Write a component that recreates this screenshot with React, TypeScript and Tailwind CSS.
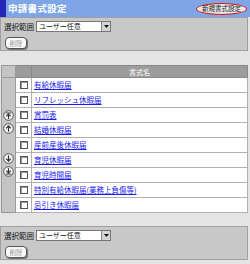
import React from "react";

const font = { fontFamily: '"Noto Sans CJK JP", "Noto Sans", sans-serif' };

const forms = [
  "有給休暇届",
  "リフレッシュ休暇届",
  "賞罰表",
  "結婚休暇届",
  "産前産後休暇届",
  "育児休暇届",
  "育児時間届",
  "特別有給休暇届(業務上負傷等)",
  "忌引き休暇届",
];

function MoveButton({ dir }: { dir: "top" | "up" | "down" | "bottom" }) {
  return (
    <svg width="11" height="11" viewBox="0 0 11 11" className="block">
      <circle cx="5.5" cy="5.5" r="4.8" fill="#f4f4f4" stroke="#555" strokeWidth="1" />
      <g stroke="#333" strokeWidth="1.1" fill="none" strokeLinecap="round" strokeLinejoin="round">
        {dir === "top" && (
          <>
            <path d="M3.2 3 H7.8" />
            <path d="M5.5 4 V8.4" />
            <path d="M3.6 6 L5.5 4.1 L7.4 6" />
          </>
        )}
        {dir === "up" && (
          <>
            <path d="M5.5 3 V8.2" />
            <path d="M3.5 5 L5.5 3 L7.5 5" />
          </>
        )}
        {dir === "down" && (
          <>
            <path d="M5.5 2.8 V8" />
            <path d="M3.5 6 L5.5 8 L7.5 6" />
          </>
        )}
        {dir === "bottom" && (
          <>
            <path d="M3.2 8 H7.8" />
            <path d="M5.5 2.6 V7" />
            <path d="M3.6 5 L5.5 6.9 L7.4 5" />
          </>
        )}
      </g>
    </svg>
  );
}

function RangePanel() {
  return (
    <div className="w-[248px] h-[34px] bg-[#c8c8c8] border border-[#a0a0a0] px-[3px] pt-[2px] leading-none">
      <div className="flex items-center gap-[2px] h-[13px]">
        <span className="text-[7.5px] text-[#111] leading-none">選択範囲</span>
        <div className="w-[75px] h-[11px] bg-white border border-[#777] flex items-center justify-between">
          <span className="text-[7px] text-[#111] leading-none pl-[2px]">ユーザー任意</span>
          <div className="w-[9px] h-[9px] bg-[#d4d4d4] border-l border-[#888] flex items-center justify-center">
            <svg width="5" height="3" viewBox="0 0 5 3">
              <path d="M0 0 H5 L2.5 3 Z" fill="#111" />
            </svg>
          </div>
        </div>
      </div>
      <button className="mt-[4px] ml-[1px] h-[12px] w-[22px] rounded-[4px] bg-[#fafafa] border border-[#555] shadow-[1px_1px_0_#777] text-[6.5px] text-[#999] leading-none flex items-center justify-center">
        削除
      </button>
    </div>
  );
}

export default function App() {
  return (
    <div className="w-[250px] h-[264px] bg-[#e4e4e4] overflow-hidden leading-none" style={font}>
      {/* title bar */}
      <div className="flex items-center justify-between h-[17px] w-[250px] bg-[#7ea6e6] border-l-[6px] border-[#2626b8] pr-[3px]">
        <span className="pl-[2px] text-[9.5px] font-bold text-white leading-none tracking-[0.3px]">申請書式設定</span>
        <button className="h-[12px] px-[5px] rounded-[50%] border-[1.5px] border-[#e01010] bg-[#e8e8e8] text-[6.5px] text-[#222] leading-none">
          新規書式設定
        </button>
      </div>

      <RangePanel />

      {/* form table */}
      <table className="mt-[14px] ml-[1px] w-[247px] border-collapse border border-[#9a9a9a] text-[7.5px] leading-[8px]">
        <thead>
          <tr className="h-[12px]">
            <th className="w-[14px] p-0 bg-[#c4c4c4] border border-[#9a9a9a]"></th>
            <th className="w-[16px] p-0 bg-[#9c9c9c] border border-[#8a8a8a]"></th>
            <th className="p-0 bg-[#9c9c9c] border border-[#8a8a8a] text-[7px] text-white font-normal">書式名</th>
          </tr>
        </thead>
        <tbody>
          {forms.map((name, i) => (
            <tr key={name} className="h-[15px]">
              {i === 0 && (
                <td rowSpan={forms.length} className="bg-[#c4c4c4] border border-[#9a9a9a] align-top p-0">
                  <div className="flex flex-col items-center pt-[32px] gap-[2px]">
                    <MoveButton dir="top" />
                    <MoveButton dir="up" />
                    <div className="h-[15px]" />
                    <MoveButton dir="down" />
                    <MoveButton dir="bottom" />
                  </div>
                </td>
              )}
              <td className="bg-white border border-[#b0b0b0] p-0">
                <div className="flex justify-center">
                  <div className="w-[8px] h-[8px] border border-[#555] bg-white shadow-[inset_1px_1px_0_#999]" />
                </div>
              </td>
              <td className="bg-white border border-[#b0b0b0] p-0 pl-[2px]">
                <span className="text-[#1a1aee] underline">{name}</span>
              </td>
            </tr>
          ))}
        </tbody>
      </table>

      <div className="mt-[13px]">
        <RangePanel />
      </div>
    </div>
  );
}
